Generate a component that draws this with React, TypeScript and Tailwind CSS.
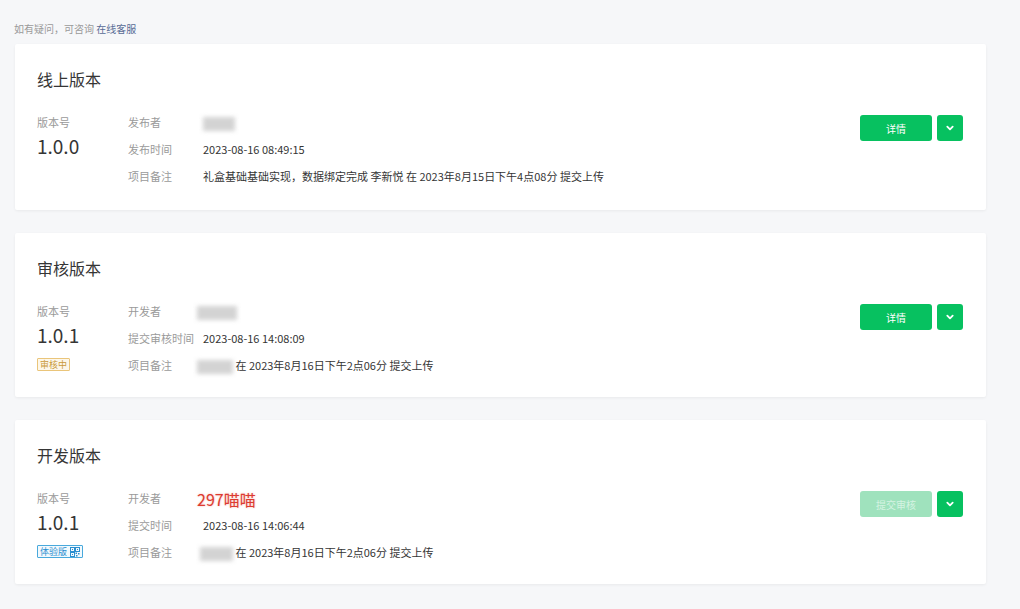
import React from "react";

type Row = { label: string; value: React.ReactNode };

const font = { fontFamily: '"Noto Sans CJK SC", "Noto Sans", sans-serif' };

function Blur({ w }: { w: number }) {
  return (
    <span
      className="inline-block h-[14px] align-middle bg-[#c9c9c9] blur-[2px] opacity-80"
      style={{ width: w }}
    />
  );
}

function Chevron() {
  return (
    <svg width="10" height="10" viewBox="0 0 10 10" fill="none">
      <path d="M2.3 3.6 5 6.3 7.7 3.6" stroke="white" strokeWidth="1.8" strokeLinecap="round" strokeLinejoin="round" />
    </svg>
  );
}

function QrIcon() {
  return (
    <svg width="10" height="10" viewBox="0 0 10 10" fill="#2b8fd0">
      <rect x="0.5" y="0.5" width="4" height="4" fill="none" stroke="#2b8fd0" strokeWidth="1" />
      <rect x="5.5" y="0.5" width="4" height="4" fill="none" stroke="#2b8fd0" strokeWidth="1" />
      <rect x="0.5" y="5.5" width="4" height="4" fill="none" stroke="#2b8fd0" strokeWidth="1" />
      <rect x="2" y="2" width="1" height="1" />
      <rect x="7" y="2" width="1" height="1" />
      <rect x="2" y="7" width="1" height="1" />
      <rect x="5.5" y="5.5" width="1.5" height="1.5" />
      <rect x="8" y="6" width="1.5" height="1.5" />
      <rect x="6" y="8" width="1.5" height="1.5" />
    </svg>
  );
}

function VersionCard({
  title,
  version,
  badge,
  rows,
  primary,
  disabled,
  tall,
}: {
  title: string;
  version: string;
  badge?: React.ReactNode;
  rows: Row[];
  primary: string;
  disabled?: boolean;
  tall?: boolean;
}) {
  return (
    <section
      className={`bg-white rounded-[2px] shadow-[0_1px_3px_rgba(0,0,0,0.06)] px-[22px] pt-[24px] ${
        tall ? "pb-[20px]" : "pb-[18px]"
      }`}
    >
      <h2 className="text-[16px] leading-[22px] text-[#353535]">{title}</h2>
      <div className="mt-[19px] flex">
        {/* version column */}
        <div className="w-[91px] shrink-0">
          <p className="text-[11px] leading-[27px] text-[#9a9a9a]">版本号</p>
          <p className="text-[19px] leading-[20px] text-[#353535]">{version}</p>
          {badge && <div className="mt-[4px]">{badge}</div>}
        </div>

        {/* info rows */}
        <div className="flex-1">
          {rows.map((r) => (
            <div key={r.label} className="flex h-[27px] items-center">
              <span className="w-[75px] shrink-0 text-[11px] text-[#9a9a9a]">{r.label}</span>
              <span className="text-[11px] text-[#353535]">{r.value}</span>
            </div>
          ))}
        </div>

        {/* actions */}
        <div className="flex gap-[5px] pt-[6px] pr-[1px]">
          <button
            className={`w-[72px] h-[26px] rounded-[3px] text-[10px] ${
              disabled ? "bg-[#9fe2bd] text-[#d4f3e2]" : "bg-[#07c160] text-white"
            }`}
          >
            {primary}
          </button>
          <button className="w-[26px] h-[26px] rounded-[3px] bg-[#07c160] flex items-center justify-center">
            <Chevron />
          </button>
        </div>
      </div>
    </section>
  );
}

export default function App() {
  return (
    <div className="min-h-[609px] w-[1020px] bg-[#f6f7f9] pt-[21px]" style={font}>
      <p className="ml-[14px] text-[10px] leading-[16px] text-[#9a9a9a]">
        如有疑问，可咨询 <span className="text-[#576b95]">在线客服</span>
      </p>

      <div className="ml-[15px] w-[971px] mt-[7px] flex flex-col gap-[23px]">
        <VersionCard
          title="线上版本"
          version="1.0.0"
          primary="详情"
          tall
          rows={[
            { label: "发布者", value: <Blur w={32} /> },
            { label: "发布时间", value: "2023-08-16 08:49:15" },
            {
              label: "项目备注",
              value: "礼盒基础基础实现，数据绑定完成 李新悦 在 2023年8月15日下午4点08分 提交上传",
            },
          ]}
        />

        <VersionCard
          title="审核版本"
          version="1.0.1"
          primary="详情"
          badge={
            <span className="inline-block border border-[#eac57a] bg-[#fdf7ea] text-[#c99a3c] text-[9px] leading-[11px] px-[2px] rounded-[1px]">
              审核中
            </span>
          }
          rows={[
            { label: "开发者", value: <span className="-ml-[6px]"><Blur w={40} /></span> },
            { label: "提交审核时间", value: "2023-08-16 14:08:09" },
            {
              label: "项目备注",
              value: (
                <span className="-ml-[6px]">
                  <Blur w={36} /> 在 2023年8月16日下午2点06分 提交上传
                </span>
              ),
            },
          ]}
        />

        <VersionCard
          title="开发版本"
          version="1.0.1"
          primary="提交审核"
          disabled
          badge={
            <span className="inline-flex items-center gap-[3px] border border-[#49a9dc] bg-[#f2f9fd] text-[#2b8fd0] text-[9px] leading-[11px] px-[2px] rounded-[1px]">
              体验版
              <QrIcon />
            </span>
          }
          rows={[
            {
              label: "开发者",
              value: (
                <span className="-ml-[6px] text-[16px] text-[#dd3b30] [text-shadow:0_0_2px_rgba(221,59,48,0.4)]">
                  297喵喵
                </span>
              ),
            },
            { label: "提交时间", value: "2023-08-16 14:06:44" },
            {
              label: "项目备注",
              value: (
                <span className="-ml-[3px]">
                  <Blur w={33} /> 在 2023年8月16日下午2点06分 提交上传
                </span>
              ),
            },
          ]}
        />
      </div>
    </div>
  );
}
